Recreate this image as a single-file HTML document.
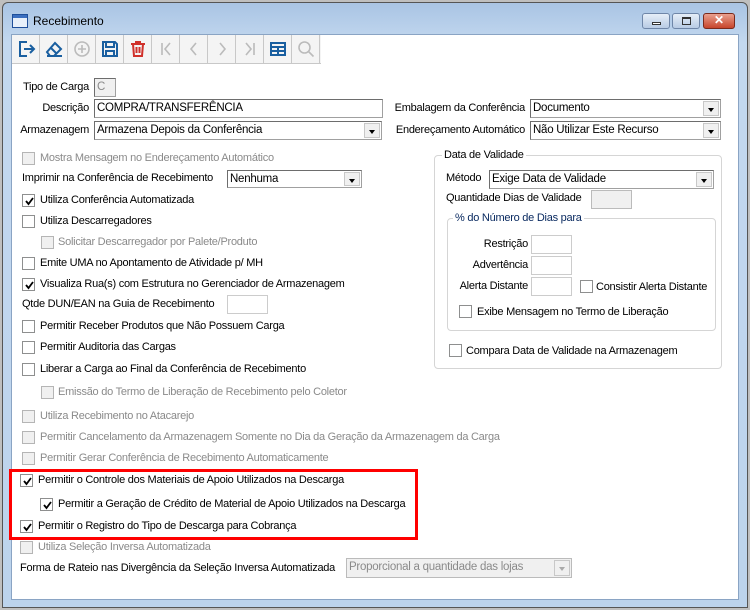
<!DOCTYPE html>
<html><head><meta charset="utf-8">
<style>
*{box-sizing:border-box;margin:0;padding:0}
body{width:750px;height:610px;position:relative;overflow:hidden;background:#bfbfbf;font-family:"Liberation Sans",sans-serif;font-size:11px;letter-spacing:-0.25px;color:#000}
.a{position:absolute}
.t{position:absolute;white-space:nowrap;line-height:13px}
.r{position:absolute;white-space:nowrap;line-height:13px;text-align:right}
.g{color:#8a8a8a}
.cb{position:absolute;width:13px;height:13px;border:1px solid #8e8f8f;background:#fff}
.cb.d{background:#f0f0f0;border-color:#b5b5b5}
.cb svg{position:absolute;left:1px;top:1px}
.in{position:absolute;background:#fff;border:1px solid #a0a0a0;border-top-color:#6d6d6d;border-left-color:#6d6d6d;padding-left:2px;font-size:11.5px;line-height:16px;white-space:nowrap}
.in.d{background:#f0f0f0;color:#8a8a8a}
.dd{position:absolute;right:1px;top:1px;bottom:1px;width:16px;background:#f0f0f0;border:1px solid #c8c8c8}
.dd:after{content:"";position:absolute;left:4px;top:6px;border-left:3.5px solid transparent;border-right:3.5px solid transparent;border-top:4px solid #000}
.dd.d:after{border-top-color:#aaa}
.tb{position:absolute;top:35px;width:28px;height:28px;border-right:1px solid #c8c8c8;display:flex;align-items:center;justify-content:center}
.grp{position:absolute;border:1px solid #d5d5d5;border-radius:4px}
.lg{position:absolute;background:#fff;padding:0 2px;line-height:13px;white-space:nowrap}
</style></head><body>
<div class="a" style="left:2px;top:2px;width:746px;height:606px;background:linear-gradient(#a9c4e4,#c3d8ef 40px,#bcd3ec);border:1px solid #555;border-radius:6px 6px 0 0"></div>
<div class="a" style="left:12px;top:14px;width:16px;height:14px;border:1px solid #1f4f9a;background:#e8f0fa"><div class="a" style="left:0;top:0;width:14px;height:3px;background:#3b6fc0"></div></div>
<div class="t" style="left:33px;top:15px;font-size:12px;letter-spacing:0">Recebimento</div>
<div class="a" style="left:642px;top:13px;width:28px;height:16px;border:1px solid #6f86a8;border-radius:3px;background:linear-gradient(#e6eef8,#b8cbe4)"><div class="a" style="left:9px;top:8px;width:9px;height:3px;border:1px solid #333;background:#fff"></div></div>
<div class="a" style="left:672px;top:13px;width:28px;height:16px;border:1px solid #6f86a8;border-radius:3px;background:linear-gradient(#e6eef8,#b8cbe4)"><div class="a" style="left:9px;top:3px;width:9px;height:8px;border:1px solid #333;border-top-width:2px"></div></div>
<div class="a" style="left:703px;top:13px;width:32px;height:16px;border:1px solid #7a2a1c;border-radius:3px;background:linear-gradient(#e9a08e,#c7452b)"><div class="t" style="left:10px;top:0;color:#fff;font-weight:bold;font-size:12px">✕</div></div>
<div class="a" style="left:11px;top:34px;width:728px;height:566px;background:#fff;border:1px solid #8aa4c4"></div>
<div class="a" style="left:12px;top:35px;width:309px;height:29px;border-bottom:1px solid #c8c8c8;background:#f4f4f4"></div>
<div class="tb" style="left:12px"><svg width="20" height="20" viewBox="0 0 20 20" fill="none" stroke="#1a5fa0" stroke-width="2"><path d="M11 3H4v14h7M8 10h10M14 6l4 4-4 4"/></svg></div>
<div class="tb" style="left:40px"><svg width="20" height="20" viewBox="0 0 20 20" fill="none" stroke="#1a5fa0" stroke-width="2"><path d="M3 13l8-9 6 6-7 7H6zM7 9l6 6M3 17h15"/></svg></div>
<div class="tb" style="left:68px"><svg width="20" height="20" viewBox="0 0 20 20" fill="none" stroke="#bbb" stroke-width="1.6"><circle cx="10" cy="10" r="7"/><path d="M10 6v8M6 10h8"/></svg></div>
<div class="tb" style="left:96px"><svg width="20" height="20" viewBox="0 0 20 20" fill="none" stroke="#1a5fa0" stroke-width="2"><path d="M3 3h12l2 2v12H3zM6 3v5h8V3M6 17v-5h8v5"/></svg></div>
<div class="tb" style="left:124px"><svg width="20" height="20" viewBox="0 0 20 20" fill="none" stroke="#d0302a" stroke-width="2"><path d="M3 5h14M8 5V3h4v2M5 5l1 12h8l1-12M8.5 8v6M11.5 8v6"/></svg></div>
<div class="tb" style="left:152px"><svg width="20" height="20" viewBox="0 0 20 20" fill="none" stroke="#bbb" stroke-width="1.6"><path d="M6 4v12M14 4l-5 6 5 6"/></svg></div>
<div class="tb" style="left:180px"><svg width="20" height="20" viewBox="0 0 20 20" fill="none" stroke="#bbb" stroke-width="1.6"><path d="M12 4l-5 6 5 6"/></svg></div>
<div class="tb" style="left:208px"><svg width="20" height="20" viewBox="0 0 20 20" fill="none" stroke="#bbb" stroke-width="1.6"><path d="M8 4l5 6-5 6"/></svg></div>
<div class="tb" style="left:236px"><svg width="20" height="20" viewBox="0 0 20 20" fill="none" stroke="#bbb" stroke-width="1.6"><path d="M6 4l5 6-5 6M14 4v12"/></svg></div>
<div class="tb" style="left:264px"><svg width="20" height="20" viewBox="0 0 20 20" fill="none" stroke="#1a5fa0" stroke-width="2"><path d="M3 4h14v12H3zM3 8h14M3 12h14M10 8v8"/></svg></div>
<div class="tb" style="left:292px"><svg width="20" height="20" viewBox="0 0 20 20" fill="none" stroke="#bbb" stroke-width="1.6"><circle cx="8.5" cy="8.5" r="5.5"/><path d="M12.5 12.5l5 5"/></svg></div>

<div class="r" style="right:661px;top:81px">Tipo de Carga</div>
<div class="in d" style="left:94px;top:78px;width:22px;height:19px">C</div>
<div class="r" style="right:661px;top:102px">Descrição</div>
<div class="in" style="left:94px;top:99px;width:289px;height:19px">COMPRA/TRANSFERÊNCIA</div>
<div class="r" style="right:661px;top:124px">Armazenagem</div>
<div class="in" style="left:94px;top:121px;width:288px;height:19px">Armazena Depois da Conferência<div class="dd"></div></div>
<div class="r" style="right:225px;top:102px">Embalagem da Conferência</div>
<div class="in" style="left:530px;top:99px;width:191px;height:19px">Documento<div class="dd"></div></div>
<div class="r" style="right:225px;top:124px">Endereçamento Automático</div>
<div class="in" style="left:530px;top:121px;width:191px;height:19px">Não Utilizar Este Recurso<div class="dd"></div></div>

<div class="cb d" style="left:22px;top:152px"></div><div class="t g" style="left:40px;top:152px">Mostra Mensagem no Endereçamento Automático</div>
<div class="t" style="left:22px;top:172px">Imprimir na Conferência de Recebimento</div>
<div class="in" style="left:227px;top:170px;width:135px;height:18px">Nenhuma<div class="dd"></div></div>
<div class="cb" style="left:22px;top:194px"><svg width="11" height="11"><path d="M2 5l2.5 3L9 2" stroke="#000" stroke-width="1.8" fill="none"/></svg></div><div class="t" style="left:40px;top:194px">Utiliza Conferência Automatizada</div>
<div class="cb" style="left:22px;top:215px"></div><div class="t" style="left:40px;top:215px">Utiliza Descarregadores</div>
<div class="cb d" style="left:41px;top:236px"></div><div class="t g" style="left:58px;top:236px">Solicitar Descarregador por Palete/Produto</div>
<div class="cb" style="left:22px;top:257px"></div><div class="t" style="left:40px;top:257px">Emite UMA no Apontamento de Atividade p/ MH</div>
<div class="cb" style="left:22px;top:278px"><svg width="11" height="11"><path d="M2 5l2.5 3L9 2" stroke="#000" stroke-width="1.8" fill="none"/></svg></div><div class="t" style="left:40px;top:278px">Visualiza Rua(s) com Estrutura no Gerenciador de Armazenagem</div>
<div class="t" style="left:22px;top:298px">Qtde DUN/EAN na Guia de Recebimento</div>
<div class="in" style="left:227px;top:295px;width:41px;height:19px;border-color:#ccc"></div>
<div class="cb" style="left:22px;top:320px"></div><div class="t" style="left:40px;top:320px">Permitir Receber Produtos que Não Possuem Carga</div>
<div class="cb" style="left:22px;top:341px"></div><div class="t" style="left:40px;top:341px">Permitir Auditoria das Cargas</div>
<div class="cb" style="left:22px;top:363px"></div><div class="t" style="left:40px;top:363px">Liberar a Carga ao Final da Conferência de Recebimento</div>
<div class="cb d" style="left:41px;top:386px"></div><div class="t g" style="left:58px;top:386px">Emissão do Termo de Liberação de Recebimento pelo Coletor</div>
<div class="cb d" style="left:22px;top:410px"></div><div class="t g" style="left:40px;top:410px">Utiliza Recebimento no Atacarejo</div>
<div class="cb d" style="left:22px;top:431px"></div><div class="t g" style="left:40px;top:431px">Permitir Cancelamento da Armazenagem Somente no Dia da Geração da Armazenagem da Carga</div>
<div class="cb d" style="left:22px;top:452px"></div><div class="t g" style="left:40px;top:452px">Permitir Gerar Conferência de Recebimento Automaticamente</div>
<div class="cb" style="left:20px;top:474px"><svg width="11" height="11"><path d="M2 5l2.5 3L9 2" stroke="#000" stroke-width="1.8" fill="none"/></svg></div><div class="t" style="left:38px;top:474px">Permitir o Controle dos Materiais de Apoio Utilizados na Descarga</div>
<div class="cb" style="left:40px;top:498px"><svg width="11" height="11"><path d="M2 5l2.5 3L9 2" stroke="#000" stroke-width="1.8" fill="none"/></svg></div><div class="t" style="left:58px;top:498px">Permitir a Geração de Crédito de Material de Apoio Utilizados na Descarga</div>
<div class="cb" style="left:20px;top:520px"><svg width="11" height="11"><path d="M2 5l2.5 3L9 2" stroke="#000" stroke-width="1.8" fill="none"/></svg></div><div class="t" style="left:38px;top:520px">Permitir o Registro do Tipo de Descarga para Cobrança</div>
<div class="a" style="left:9px;top:469px;width:409px;height:71px;border:3px solid #f00"></div>
<div class="cb d" style="left:20px;top:541px"></div><div class="t g" style="left:38px;top:541px">Utiliza Seleção Inversa Automatizada</div>
<div class="t" style="left:20px;top:562px">Forma de Rateio nas Divergência da Seleção Inversa Automatizada</div>
<div class="in d" style="left:346px;top:558px;width:226px;height:20px;border-color:#bbb">Proporcional a quantidade das lojas<div class="dd d"></div></div>

<div class="grp" style="left:434px;top:155px;width:288px;height:214px"></div>
<div class="lg" style="left:442px;top:149px">Data de Validade</div>
<div class="t" style="left:446px;top:172px">Método</div>
<div class="in" style="left:489px;top:170px;width:225px;height:19px">Exige Data de Validade<div class="dd"></div></div>
<div class="t" style="left:446px;top:192px">Quantidade Dias de Validade</div>
<div class="in d" style="left:591px;top:190px;width:41px;height:19px;border-color:#bbb"></div>
<div class="grp" style="left:447px;top:218px;width:269px;height:113px"></div>
<div class="lg" style="left:453px;top:212px;color:#0a2a60">% do Número de Dias para</div>
<div class="r" style="right:222px;top:238px">Restrição</div>
<div class="in" style="left:531px;top:235px;width:41px;height:19px;border-color:#ccc"></div>
<div class="r" style="right:222px;top:259px">Advertência</div>
<div class="in" style="left:531px;top:256px;width:41px;height:19px;border-color:#ccc"></div>
<div class="r" style="right:222px;top:280px">Alerta Distante</div>
<div class="in" style="left:531px;top:277px;width:41px;height:19px;border-color:#ccc"></div>
<div class="cb" style="left:580px;top:280px"></div><div class="t" style="left:596px;top:281px">Consistir Alerta Distante</div>
<div class="cb" style="left:459px;top:305px"></div><div class="t" style="left:477px;top:306px">Exibe Mensagem no Termo de Liberação</div>
<div class="cb" style="left:449px;top:344px"></div><div class="t" style="left:466px;top:345px">Compara Data de Validade na Armazenagem</div>
</body></html>
